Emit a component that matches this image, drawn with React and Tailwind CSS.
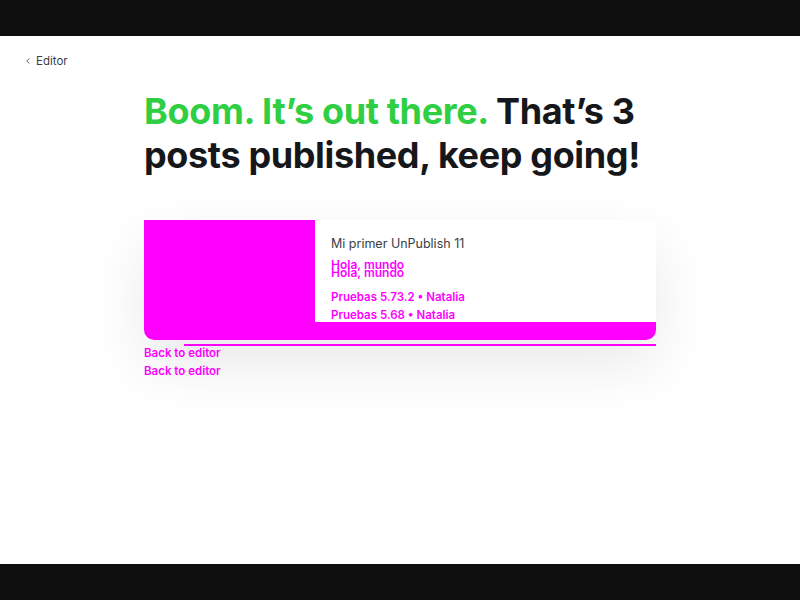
import React from 'react';

const MAGENTA = 'text-[#ff00ff]';

const ChevronLeft = () => (
  <svg width="8" height="8" viewBox="0 0 8 8" fill="none" className="text-[#5a6168]">
    <path d="M5 1.8L2.8 4L5 6.2" stroke="currentColor" strokeWidth="1" strokeLinecap="round" strokeLinejoin="round" />
  </svg>
);

const PostCard = () => (
  <div className="relative">
    <div className="rounded-[4px] bg-white shadow-[0_24px_60px_rgba(0,0,0,0.09)]">
      <div className="flex h-[102px]">
        <div className="w-[171px] bg-[#ff00ff]" />
        <div className="flex-1 pl-4 pt-[15px]">
          <div className="text-[12.5px] leading-[18px] text-[#394047]">Mi primer UnPublish 11</div>
          <div className={`mt-[8px] text-[12px] font-semibold leading-[8px] ${MAGENTA}`}>
            <div>Hola, mundo</div>
            <div>Hola, mundo</div>
          </div>
          <div className={`mt-[11px] text-[11.5px] font-semibold leading-[18px] ${MAGENTA}`}>
            <div>Pruebas 5.73.2 • Natalia</div>
            <div>Pruebas 5.68 • Natalia</div>
          </div>
        </div>
      </div>
      <div className="h-[18px] bg-[#ff00ff] rounded-b-[10px]" />
    </div>
    <div className="mt-[4px] h-[2px] ml-[40px] bg-[#ff00ff]" />
    <div className={`mt-[-2px] text-[11.5px] font-semibold leading-[18px] ${MAGENTA}`}>
      <div>Back to editor</div>
      <div>Back to editor</div>
    </div>
  </div>
);

export default function App() {
  return (
    <div className="h-[600px] flex flex-col bg-[#0f0f0f] font-['Inter',sans-serif]">
      <div className="h-[36px]" />
      <div className="flex-1 bg-white px-6 pt-[17px]">
        <div className="flex items-center gap-[4px] text-[11.5px] leading-4 text-[#394047]">
          <ChevronLeft />
          <span>Editor</span>
        </div>
        <div className="mx-auto w-[512px]">
          <h1 className="mt-[20px] text-[36px] leading-[44px] font-bold tracking-[-0.01em] text-[#15171a]">
            <span className="text-[#30cf43]">Boom. It’s out there.</span> That’s 3 posts published, keep going!
          </h1>
          <div className="mt-[43px]">
            <PostCard />
          </div>
        </div>
      </div>
      <div className="h-[36px]" />
    </div>
  );
}
